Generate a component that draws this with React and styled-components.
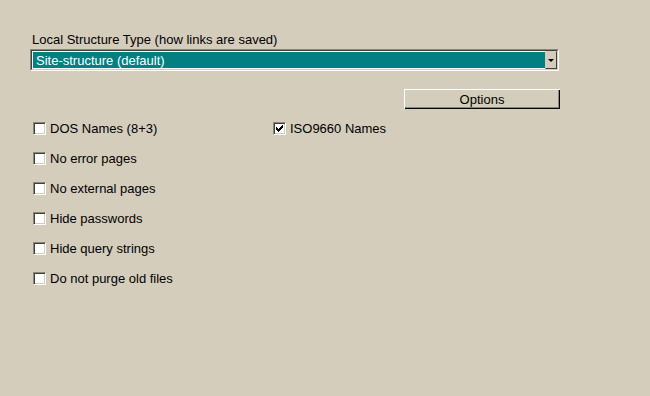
import React, { useState } from 'react';
import styled, { createGlobalStyle } from 'styled-components';

const face = '#d4cdbc';
const shadow = '#8c8674';
const dark = '#404040';

const GlobalStyle = createGlobalStyle`
  html, body {
    margin: 0;
    padding: 0;
    background: ${face};
  }
  body {
    font-family: "Liberation Sans", Arial, sans-serif;
    font-size: 13px;
    color: #000;
  }
`;

const Page = styled.div`
  width: 650px;
  height: 396px;
  box-sizing: border-box;
  padding: 32px 91px 0 30px;
`;

const Label = styled.div`
  padding-left: 2px;
  height: 16px;
  line-height: 16px;
`;

const Select = styled.div`
  display: flex;
  height: 22px;
  box-sizing: border-box;
  border-top: 1px solid ${shadow};
  border-left: 1px solid ${shadow};
  border-right: 1px solid #fff;
  border-bottom: 1px solid #fff;
  margin-top: 1px;
`;

const SelectInner = styled.div`
  flex: 1;
  display: flex;
  border-top: 1px solid ${dark};
  border-left: 1px solid ${dark};
  border-right: 1px solid ${face};
  border-bottom: 1px solid ${face};
  background: #fff;
`;

const SelectValue = styled.div`
  flex: 1;
  background: #008080;
  color: #fff;
  padding-left: 3px;
  line-height: 18px;
  border: 1px solid #fff;
  border-right: none;
`;

const ArrowButton = styled.div`
  width: 12px;
  display: flex;
  align-items: center;
  justify-content: center;
  background: ${face};
  border-top: 1px solid ${face};
  border-left: 1px solid ${face};
  border-right: 1px solid ${dark};
  border-bottom: 1px solid ${dark};
  box-sizing: border-box;
`;

const Arrow = styled.div`
  width: 0;
  height: 0;
  border-left: 3px solid transparent;
  border-right: 3px solid transparent;
  border-top: 3px solid #000;
`;

const ButtonRow = styled.div`
  display: flex;
  justify-content: flex-end;
  margin-top: 18px;
  margin-right: -1px;
`;

const Button = styled.button`
  width: 156px;
  height: 20px;
  padding: 0;
  font: inherit;
  color: #000;
  background: ${face};
  border: none;
  box-shadow: inset 1px 1px 0 #fff, inset -1px -1px 0 #000, inset -2px -2px 0 ${shadow};
`;

const Grid = styled.div`
  display: grid;
  grid-template-columns: 240px 240px;
  grid-auto-rows: 30px;
  margin-top: 4px;
  padding-left: 3px;
`;

const Option = styled.label`
  display: flex;
  align-items: center;
  gap: 4px;
  height: 30px;
  line-height: 15px;
  grid-column: ${({ col }) => col || 1};
  grid-row: ${({ row }) => row};
`;

const Box = styled.span`
  width: 13px;
  height: 13px;
  box-sizing: border-box;
  background: #fff;
  border-top: 1px solid ${shadow};
  border-left: 1px solid ${shadow};
  border-right: 1px solid #fff;
  border-bottom: 1px solid #fff;
  box-shadow: inset 1px 1px 0 ${dark}, inset -1px -1px 0 ${face};
  display: flex;
  align-items: center;
  justify-content: center;
`;

const options = [
  { label: 'DOS Names (8+3)', row: 1 },
  { label: 'ISO9660 Names', row: 1, col: 2, checked: true },
  { label: 'No error pages', row: 2 },
  { label: 'No external pages', row: 3 },
  { label: 'Hide passwords', row: 4 },
  { label: 'Hide query strings', row: 5 },
  { label: 'Do not purge old files', row: 6 },
];

const Check = () => (
  <svg width="7" height="7" viewBox="0 0 7 7">
    <path d="M0 2h1v1h1v1h1V3h1V2h1V1h1V0h1v3H6v1H5v1H4v1H3v1H2V6H1V5H0z" fill="#000" />
  </svg>
);

export default function App() {
  const [state, setState] = useState(options.map((o) => !!o.checked));

  return (
    <>
      <GlobalStyle />
      <Page>
        <Label>Local Structure Type (how links are saved)</Label>
        <Select>
          <SelectInner>
            <SelectValue>Site-structure (default)</SelectValue>
            <ArrowButton>
              <Arrow />
            </ArrowButton>
          </SelectInner>
        </Select>
        <ButtonRow>
          <Button>Options</Button>
        </ButtonRow>
        <Grid>
          {options.map((o, i) => (
            <Option
              key={o.label}
              row={o.row}
              col={o.col}
              onClick={() => setState((s) => s.map((v, j) => (j === i ? !v : v)))}
            >
              <Box>{state[i] && <Check />}</Box>
              {o.label}
            </Option>
          ))}
        </Grid>
      </Page>
    </>
  );
}
